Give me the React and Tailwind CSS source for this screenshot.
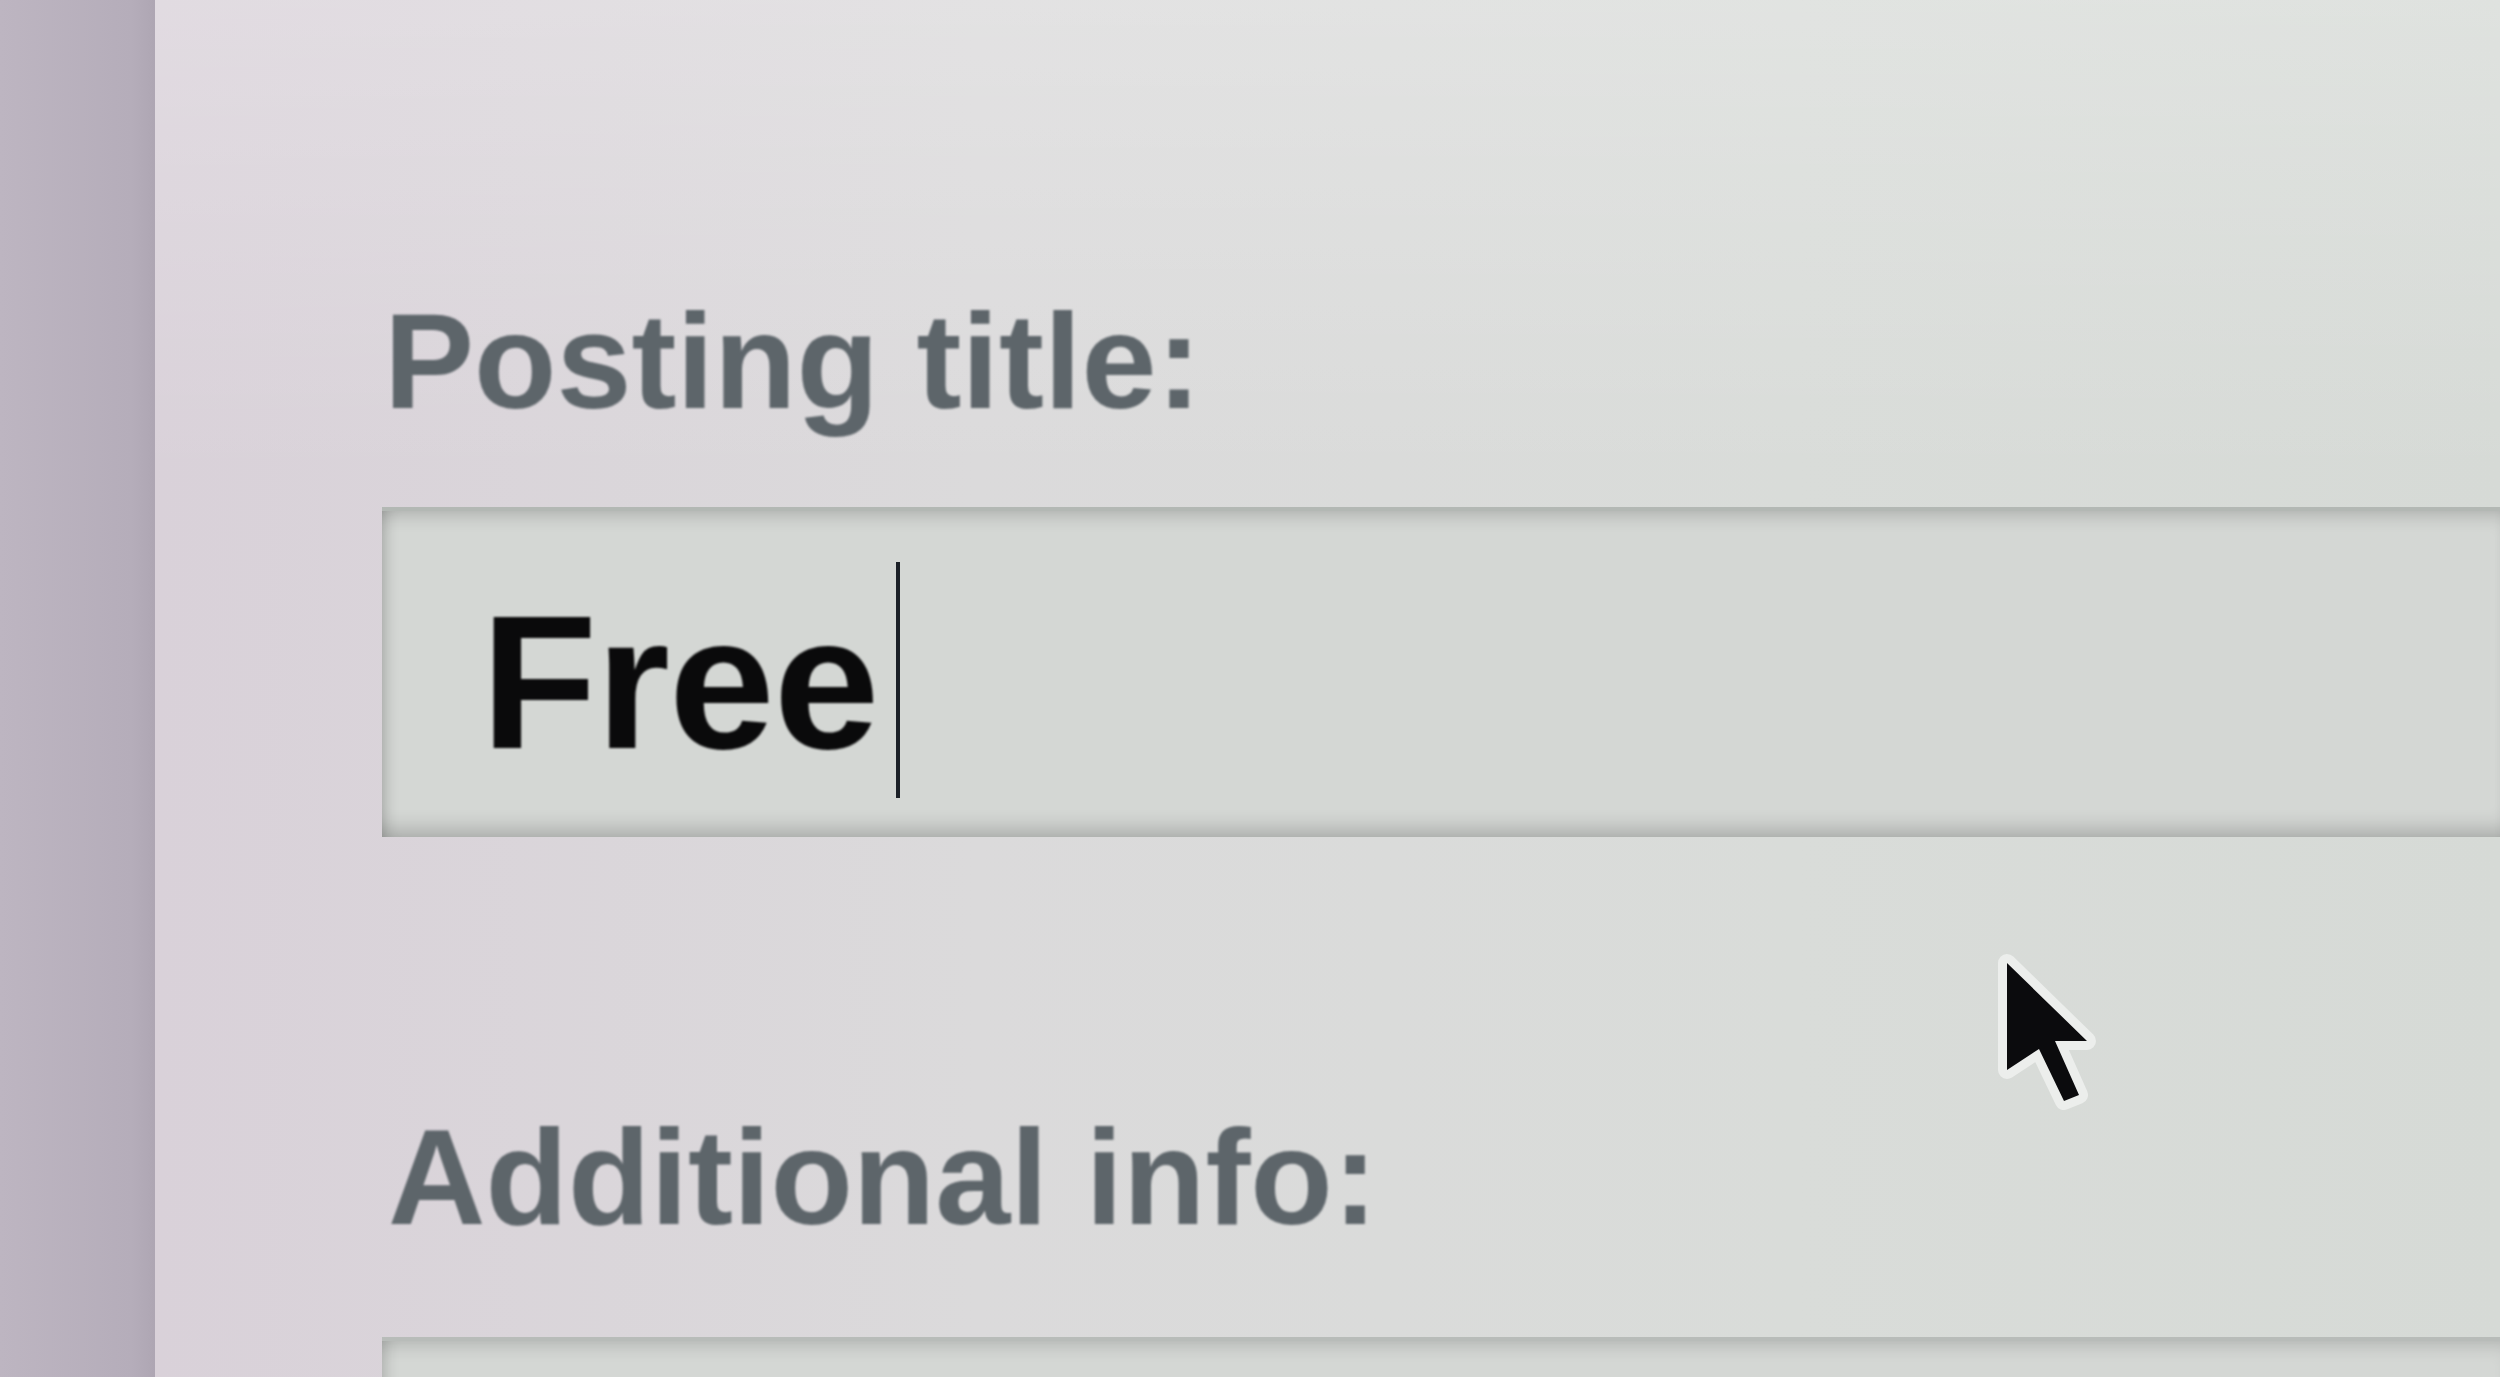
import React from "react";

function Pointer() {
  return (
    <svg
      className="absolute left-[1987px] top-[943px]"
      width="130"
      height="185"
      viewBox="-20 -20 130 185"
    >
      <path
        d="M0 0 L0 107 L32 86 L57 138 L72 132 L48 78 L80 78 Z"
        fill="#0b0b0d"
        stroke="#eceeec"
        strokeWidth="18"
        strokeLinejoin="round"
        paintOrder="stroke"
      />
    </svg>
  );
}

export default function App() {
  return (
    <div
      className="relative flex h-[1377px] w-[2500px] overflow-hidden"
      style={{ fontFamily: '"Liberation Sans", Arial, sans-serif' }}
    >
      <div className="h-full w-[155px] shrink-0 bg-[linear-gradient(to_right,#bdb5c1,#b5adba_85%,#aea6b3)]" />

      <div className="flex h-full flex-1 flex-col pl-[227px] bg-[linear-gradient(to_bottom,rgba(255,255,255,0.22),rgba(255,255,255,0)_35%),linear-gradient(to_right,#d9d1d9,#dbdadb_35%,#d9dcd9_70%,#d6dad6)]">
        <div className="mt-[294px] pl-[2px] text-[135px] font-bold leading-none text-[#5d656a] blur-[1px]">
          Posting title:
        </div>

        <div className="mt-[78px] flex h-[330px] w-full shrink-0 border-t-[4px] border-[#b3b8b4] bg-[#d4d7d4] pl-[99px] shadow-[inset_14px_0_14px_-10px_rgba(0,0,0,0.18),inset_0_16px_18px_-12px_rgba(0,0,0,0.18),inset_0_-22px_20px_-14px_rgba(0,0,0,0.2)]">
          <div className="mt-[76px] text-[190px] font-bold leading-none tracking-[-1px] text-[#0a0a0b] blur-[1px]">
            Free
          </div>
          <div className="ml-[18px] mt-[51px] h-[236px] w-[4px] bg-[#1b2027] blur-[0.5px]" />
        </div>

        <div className="mt-[273px] pl-[6px] text-[135px] font-bold leading-none text-[#5d656a] blur-[1px]">
          Additional info:
        </div>

        <div className="mt-[92px] h-[120px] w-full shrink-0 border-t-[4px] border-[#b8bcb9] bg-[#d4d7d4] shadow-[inset_14px_0_14px_-10px_rgba(0,0,0,0.16),inset_0_16px_18px_-12px_rgba(0,0,0,0.16)]" />
      </div>

      <Pointer />
    </div>
  );
}
